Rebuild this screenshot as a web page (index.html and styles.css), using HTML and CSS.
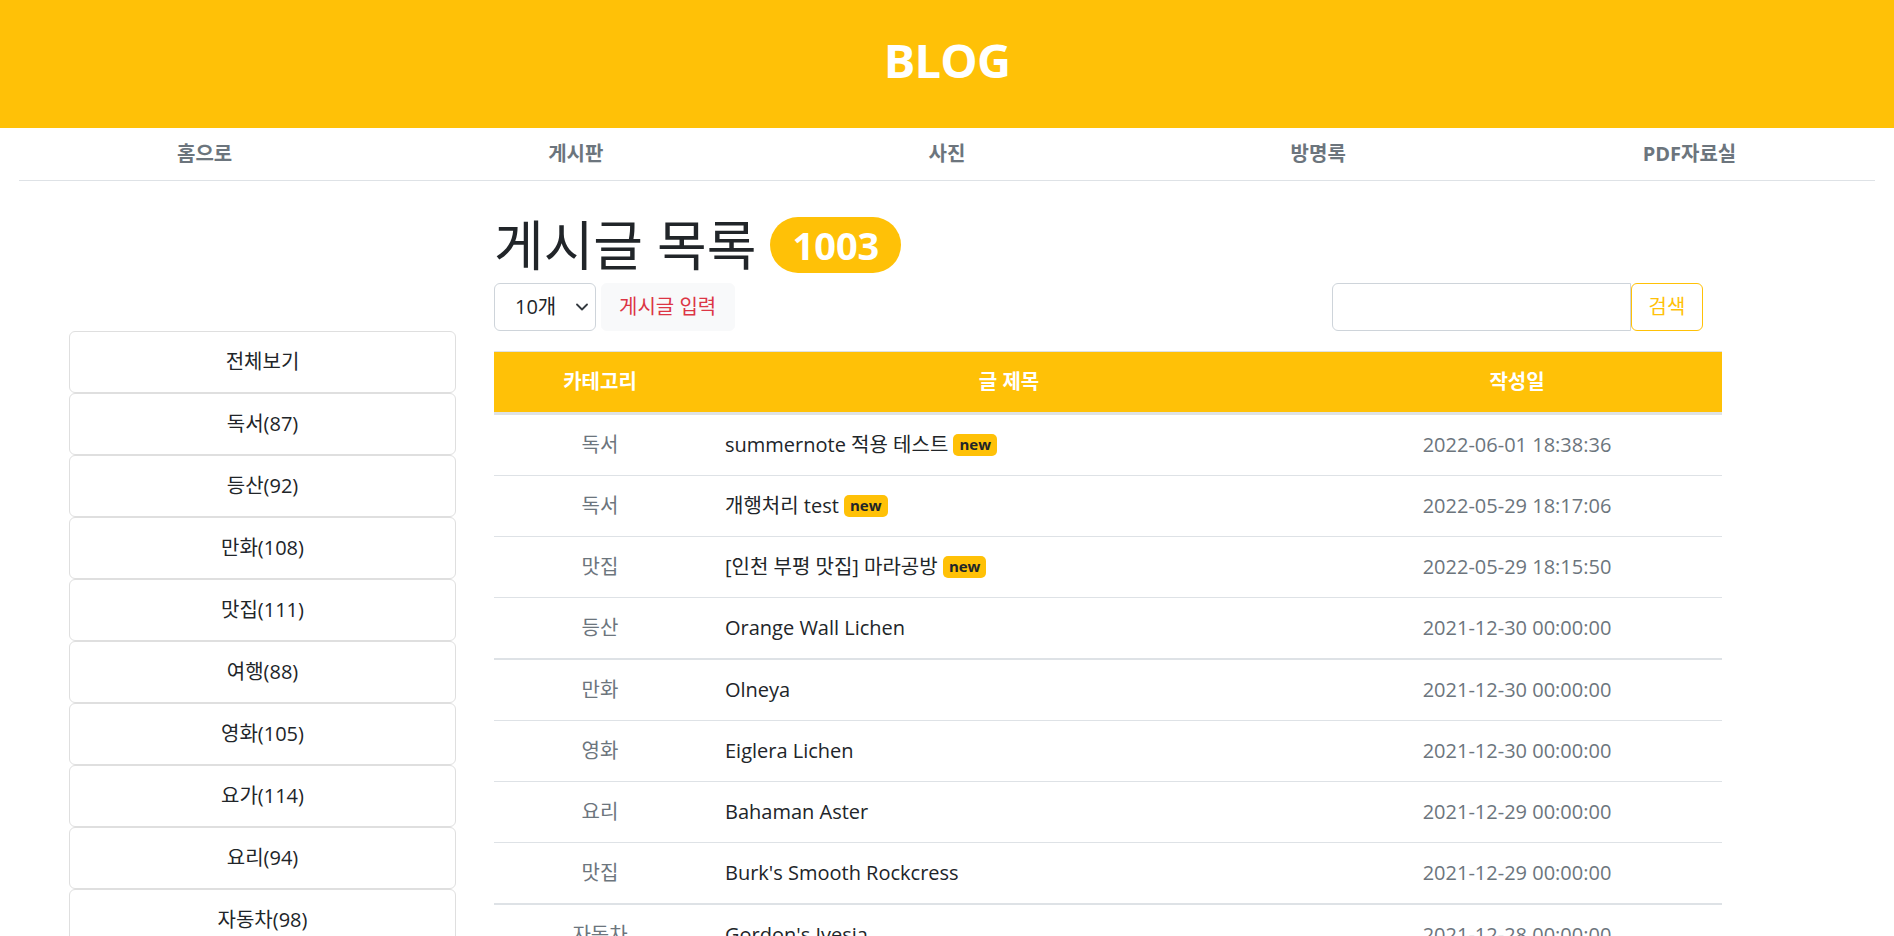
FILE: index.html
```html
<!DOCTYPE html>
<html lang="ko">
<head>
<meta charset="utf-8">
<title>BLOG</title>
<link rel="stylesheet" href="styles.css">
</head>
<body>
<header class="site-header">
  <h1 class="brand">BLOG</h1>
</header>
<nav class="main-nav">
  <a class="nav-link" href="#">홈으로</a>
  <a class="nav-link" href="#">게시판</a>
  <a class="nav-link" href="#">사진</a>
  <a class="nav-link" href="#">방명록</a>
  <a class="nav-link" href="#">PDF자료실</a>
</nav>
<div class="layout">
  <aside class="sidebar">
    <ul class="cat-list">
      <li class="cat-item">전체보기</li>
      <li class="cat-item">독서(87)</li>
      <li class="cat-item">등산(92)</li>
      <li class="cat-item">만화(108)</li>
      <li class="cat-item">맛집(111)</li>
      <li class="cat-item">여행(88)</li>
      <li class="cat-item">영화(105)</li>
      <li class="cat-item">요가(114)</li>
      <li class="cat-item">요리(94)</li>
      <li class="cat-item">자동차(98)</li>
    </ul>
  </aside>
  <main class="content">
    <div class="title-row">
      <h2 class="page-title">게시글 목록</h2>
      <span class="count-badge">1003</span>
    </div>
    <div class="toolbar">
      <div class="toolbar-left">
        <div class="select">
          <span>10개</span>
          <svg class="chevron" width="12" height="8" viewBox="0 0 12 8"><path d="M1 1.5l5 5 5-5" fill="none" stroke="#343a40" stroke-width="1.8" stroke-linecap="round" stroke-linejoin="round"/></svg>
        </div>
        <button class="btn-write" type="button">게시글 입력</button>
      </div>
      <form class="search">
        <input class="search-input" type="text">
        <button class="btn-search" type="button">검색</button>
      </form>
    </div>
    <table class="board">
      <colgroup>
        <col class="col-cat">
        <col class="col-title">
        <col class="col-date">
      </colgroup>
      <thead>
        <tr><th>카테고리</th><th>글 제목</th><th>작성일</th></tr>
      </thead>
      <tbody>
        <tr><td class="cat">독서</td><td class="title">summernote 적용 테스트 <span class="new-badge">new</span></td><td class="date">2022-06-01 18:38:36</td></tr>
        <tr><td class="cat">독서</td><td class="title">개행처리 test <span class="new-badge">new</span></td><td class="date">2022-05-29 18:17:06</td></tr>
        <tr><td class="cat">맛집</td><td class="title">[인천 부평 맛집] 마라공방 <span class="new-badge">new</span></td><td class="date">2022-05-29 18:15:50</td></tr>
        <tr class="group-end"><td class="cat">등산</td><td class="title">Orange Wall Lichen</td><td class="date">2021-12-30 00:00:00</td></tr>
        <tr><td class="cat">만화</td><td class="title">Olneya</td><td class="date">2021-12-30 00:00:00</td></tr>
        <tr><td class="cat">영화</td><td class="title">Eiglera Lichen</td><td class="date">2021-12-30 00:00:00</td></tr>
        <tr><td class="cat">요리</td><td class="title">Bahaman Aster</td><td class="date">2021-12-29 00:00:00</td></tr>
        <tr class="group-end"><td class="cat">맛집</td><td class="title">Burk's Smooth Rockcress</td><td class="date">2021-12-29 00:00:00</td></tr>
        <tr><td class="cat">자동차</td><td class="title">Gordon's Ivesia</td><td class="date">2021-12-28 00:00:00</td></tr>
        <tr><td class="cat">여행</td><td class="title">Alpine Sweetvetch</td><td class="date">2021-12-28 00:00:00</td></tr>
      </tbody>
    </table>
  </main>
</div>
</body>
</html>
```

FILE: styles.css
```css
* { box-sizing: border-box; }

body {
  margin: 0;
  font-family: "Open Sans", "Noto Sans CJK KR", sans-serif;
  font-size: 20px;
  line-height: 1.5;
  color: #212529;
  background: #fff;
}

.site-header {
  height: 128px;
  background: #ffc107;
  display: flex;
  align-items: center;
  justify-content: center;
  padding-bottom: 8px;
}

.brand {
  margin: 0;
  color: #fff;
  font-size: 47px;
  font-weight: 700;
  line-height: 1;
  letter-spacing: -0.8px;
}

.main-nav {
  margin: 0 19px;
  display: flex;
  border-bottom: 1px solid #dee2e6;
}

.nav-link {
  flex: 1 1 0;
  text-align: center;
  padding: 11px 0;
  line-height: 30px;
  font-weight: 700;
  color: #6c757d;
  text-decoration: none;
}

.layout {
  display: flex;
  align-items: flex-start;
}

.sidebar {
  width: 387px;
  margin-left: 69px;
  margin-top: 150px;
  flex: none;
}

.cat-list {
  list-style: none;
  margin: 0;
  padding: 0;
}

.cat-item {
  border: 1px solid #dfdfdf;
  border-radius: 6px;
  padding: 15px;
  line-height: 30px;
  text-align: center;
  color: #212529;
}

.content {
  width: 1228px;
  margin-left: 38px;
  flex: none;
}

.title-row {
  margin-top: 36px;
  height: 56px;
  display: flex;
  align-items: center;
  gap: 14px;
}

.page-title {
  margin: 0;
  font-size: 54px;
  font-weight: 400;
  line-height: 60px;
  color: #212529;
}

.count-badge {
  background: #ffc107;
  color: #fff;
  font-size: 38px;
  font-weight: 700;
  line-height: 1;
  padding: 9px 22px;
  border-radius: 40px;
}

.toolbar {
  margin-top: 10px;
  display: flex;
  justify-content: space-between;
  padding-right: 19px;
}

.toolbar-left {
  display: flex;
  gap: 5px;
}

.select {
  width: 102px;
  height: 48px;
  border: 1px solid #ced4da;
  border-radius: 6px;
  display: flex;
  align-items: center;
  justify-content: space-between;
  padding: 0 7px 0 20px;
  color: #212529;
}

.btn-write {
  height: 48px;
  padding: 0 18px 0 17px;
  background: #f8f9fa;
  border: 1px solid #f8f9fa;
  border-radius: 6px;
  color: #dc3545;
  font: inherit;
}

.search {
  display: flex;
  margin: 0;
}

.search-input {
  width: 299px;
  height: 48px;
  border: 1px solid #ced4da;
  border-radius: 6px 0 0 6px;
  font: inherit;
  padding: 0 15px;
}

.btn-search {
  width: 72px;
  height: 48px;
  background: #fff;
  border: 1px solid #ffc107;
  border-radius: 6px;
  color: #ffc107;
  font: inherit;
}

.board {
  margin-top: 20px;
  width: 1228px;
  border-collapse: collapse;
  table-layout: fixed;
}

.col-cat { width: 212px; }
.col-title { width: 606px; }
.col-date { width: 410px; }

.board th {
  background: #ffc107;
  color: #fff;
  font-weight: 700;
  padding: 15px 10px;
  line-height: 30px;
  text-align: center;
  border-top: 1px solid #dee2e6;
  border-bottom: 3px solid #dee2e6;
}

.board td {
  padding: 15px 10px;
  line-height: 30px;
  border-bottom: 1px solid #dee2e6;
  white-space: nowrap;
}

.board tr.group-end td {
  border-bottom: 2px solid #dee2e6;
}

.board td.cat {
  text-align: center;
  color: #6c757d;
}

.board td.title {
  padding-left: 19px;
  color: #212529;
}

.board td.date {
  text-align: center;
  color: #6c757d;
}

.new-badge {
  display: inline-block;
  background: #ffc107;
  color: #212529;
  font-size: 15px;
  font-weight: 700;
  line-height: 1;
  padding: 3px 6px 4px;
  border-radius: 5px;
  vertical-align: 2px;
}
```
